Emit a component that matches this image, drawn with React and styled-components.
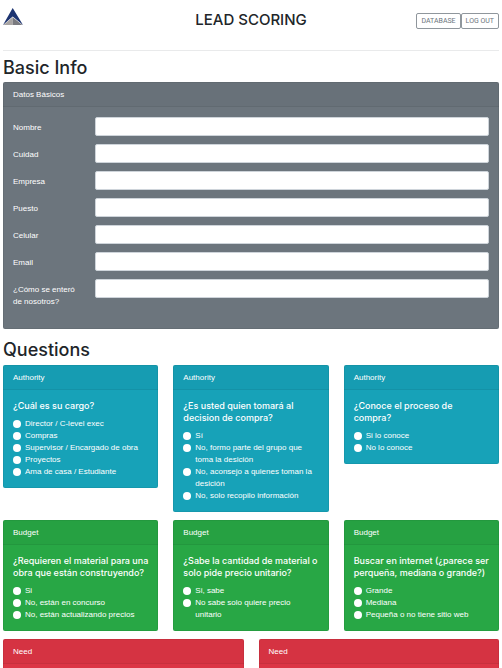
import React from "react";
import styled, { createGlobalStyle } from "styled-components";

const GlobalStyle = createGlobalStyle`
  *, *::before, *::after { box-sizing: border-box; }
  body {
    margin: 0;
    background: #fff;
    color: #212529;
    font: 400 8px/12px "Liberation Sans", Arial, sans-serif;
  }
`;

const headingFont = `Inter, "Liberation Sans", sans-serif`;

const Page = styled.div`
  height: 100vh;
  overflow: hidden;
  padding: 0 3px;
`;

const Header = styled.header`
  display: grid;
  grid-template-columns: 1fr auto 1fr;
  align-items: start;
  height: 51px;
  padding-top: 8px;
  border-bottom: 1px solid #e9eaeb;
`;

const Logo = styled.svg`
  display: block;
  width: 20px;
  height: 17px;
`;

const Title = styled.h1`
  margin: 0;
  padding-top: 2px;
  font-family: ${headingFont};
  font-size: 15px;
  line-height: 20px;
  font-weight: 500;
`;

const Actions = styled.nav`
  display: flex;
  justify-content: flex-end;
  padding-top: 5px;
`;

const ActionButton = styled.button`
  height: 16px;
  padding: 0 4px;
  border: 1px solid #8f969c;
  border-radius: 2px;
  background: #fff;
  color: #6c757d;
  font-family: Roboto, "Liberation Sans", sans-serif;
  font-size: 7px;
  line-height: 14px;
  white-space: nowrap;
`;

const SectionTitle = styled.h2`
  margin: 0;
  padding: ${(p) => (p.$first ? "5px 0 2px" : "9px 0 3px")};
  font-family: ${headingFont};
  font-size: 18px;
  line-height: 24px;
  font-weight: 500;
`;

const tones = {
  gray: "#6c757d",
  teal: "#17a2b8",
  green: "#28a745",
  red: "#dc3545",
};

const Card = styled.section`
  border-radius: 2px;
  overflow: hidden;
  color: #fff;
  background: ${(p) => tones[p.$tone]};
  box-shadow: inset 0 0 0 1px rgba(0, 0, 0, 0.06);
`;

const CardHeader = styled.div`
  padding: 7px 10px 5px;
  background: rgba(0, 0, 0, 0.03);
  border-bottom: 1px solid rgba(0, 0, 0, 0.06);
`;

const CardBody = styled.div`
  padding: 10px;
`;

const Field = styled.div`
  display: grid;
  grid-template-columns: 2fr 11fr;
  column-gap: 10px;
  align-items: start;
  margin-bottom: 8px;
`;

const FieldLabel = styled.label`
  padding: 5px 8px 3px 0;
  margin-bottom: ${(p) => (p.$tall ? "0" : "-1px")};
`;

const TextInput = styled.input`
  width: 100%;
  height: 19px;
  padding: 3px 6px;
  border: 1px solid #ced4da;
  border-radius: 2px;
  background: #fff;
  color: #495057;
  font: inherit;
`;

const CardRow = styled.div`
  display: grid;
  grid-template-columns: repeat(${(p) => p.$columns}, minmax(0, 1fr));
  column-gap: 15px;
  align-items: start;
  margin-bottom: 8px;
`;

const Question = styled.fieldset`
  margin: 0;
  padding: 0;
  border: 0;
  min-width: 0;
`;

const QuestionText = styled.legend`
  padding: 0 0 6px;
  font-family: ${headingFont};
  font-size: 9px;
  line-height: 12px;
  font-weight: 500;
`;

const Option = styled.label`
  display: flex;
  align-items: flex-start;
  gap: 4px;
`;

const Radio = styled.input`
  appearance: none;
  flex: none;
  width: 8px;
  height: 8px;
  margin: 2px 0;
  border-radius: 50%;
  background: #fff;

  &:checked {
    border: 2px solid #fff;
    background: #0075ff;
  }
`;

const fields = [
  ["nombre", "Nombre"],
  ["ciudad", "Cuidad"],
  ["empresa", "Empresa"],
  ["puesto", "Puesto"],
  ["celular", "Celular"],
  ["email", "Email"],
  ["origen", "¿Cómo se enteró de nosotros?"],
];

const authority = [
  {
    text: "¿Cuál es su cargo?",
    options: [
      "Director / C-level exec",
      "Compras",
      "Supervisor / Encargado de obra",
      "Proyectos",
      "Ama de casa / Estudiante",
    ],
  },
  {
    text: "¿Es usted quien tomará al decision de compra?",
    options: [
      "Sí",
      "No, formo parte del grupo que toma la desición",
      "No, aconsejo a quienes toman la desición",
      "No, solo recopilo información",
    ],
  },
  {
    text: "¿Conoce el proceso de compra?",
    options: ["Si lo conoce", "No lo conoce"],
  },
];

const budget = [
  {
    text: "¿Requieren el material para una obra que están construyendo?",
    options: ["Si", "No, están en concurso", "No, están actualizando precios"],
  },
  {
    text: "¿Sabe la cantidad de material o solo pide precio unitario?",
    options: ["Si, sabe", "No sabe solo quiere precio unitario"],
  },
  {
    text: "Buscar en internet (¿parece ser perqueña, mediana o grande?)",
    options: ["Grande", "Mediana", "Pequeña o no tiene sitio web"],
  },
];

function QuestionCards({ name, tone, questions }) {
  return (
    <CardRow $columns={questions.length}>
      {questions.map((question) => (
        <Card key={question.text} $tone={tone}>
          <CardHeader>{name}</CardHeader>
          <CardBody>
            <Question>
              <QuestionText>{question.text}</QuestionText>
              {question.options.map((option) => (
                <Option key={option}>
                  <Radio type="radio" name={question.text} value={option} />
                  <span>{option}</span>
                </Option>
              ))}
            </Question>
          </CardBody>
        </Card>
      ))}
    </CardRow>
  );
}

export default function App() {
  return (
    <>
      <GlobalStyle />
      <Page>
        <Header>
          <Logo viewBox="0 0 20 17" aria-hidden="true">
            <path d="M9.7 0 20 17 9.7 8.6 0 17Z" fill="#1d3471" />
            <path d="M9.7 9.2 0.4 17h9.3Z" fill="#a8a4a2" />
            <path d="M9.7 9.2 19.4 17H9.7Z" fill="#7b7b80" />
          </Logo>
          <Title>LEAD SCORING</Title>
          <Actions>
            <ActionButton type="button">DATABASE</ActionButton>
            <ActionButton type="button">LOG OUT</ActionButton>
          </Actions>
        </Header>

        <SectionTitle $first>Basic Info</SectionTitle>
        <Card $tone="gray">
          <CardHeader>Datos Básicos</CardHeader>
          <CardBody>
            {fields.map(([id, label], index) => (
              <Field key={id}>
                <FieldLabel htmlFor={id} $tall={index === fields.length - 1}>
                  {label}
                </FieldLabel>
                <TextInput id={id} type="text" />
              </Field>
            ))}
          </CardBody>
        </Card>

        <SectionTitle>Questions</SectionTitle>
        <QuestionCards name="Authority" tone="teal" questions={authority} />
        <QuestionCards name="Budget" tone="green" questions={budget} />
        <CardRow $columns={2}>
          <Card $tone="red">
            <CardHeader>Need</CardHeader>
            <CardBody />
          </Card>
          <Card $tone="red">
            <CardHeader>Need</CardHeader>
            <CardBody />
          </Card>
        </CardRow>
      </Page>
    </>
  );
}
